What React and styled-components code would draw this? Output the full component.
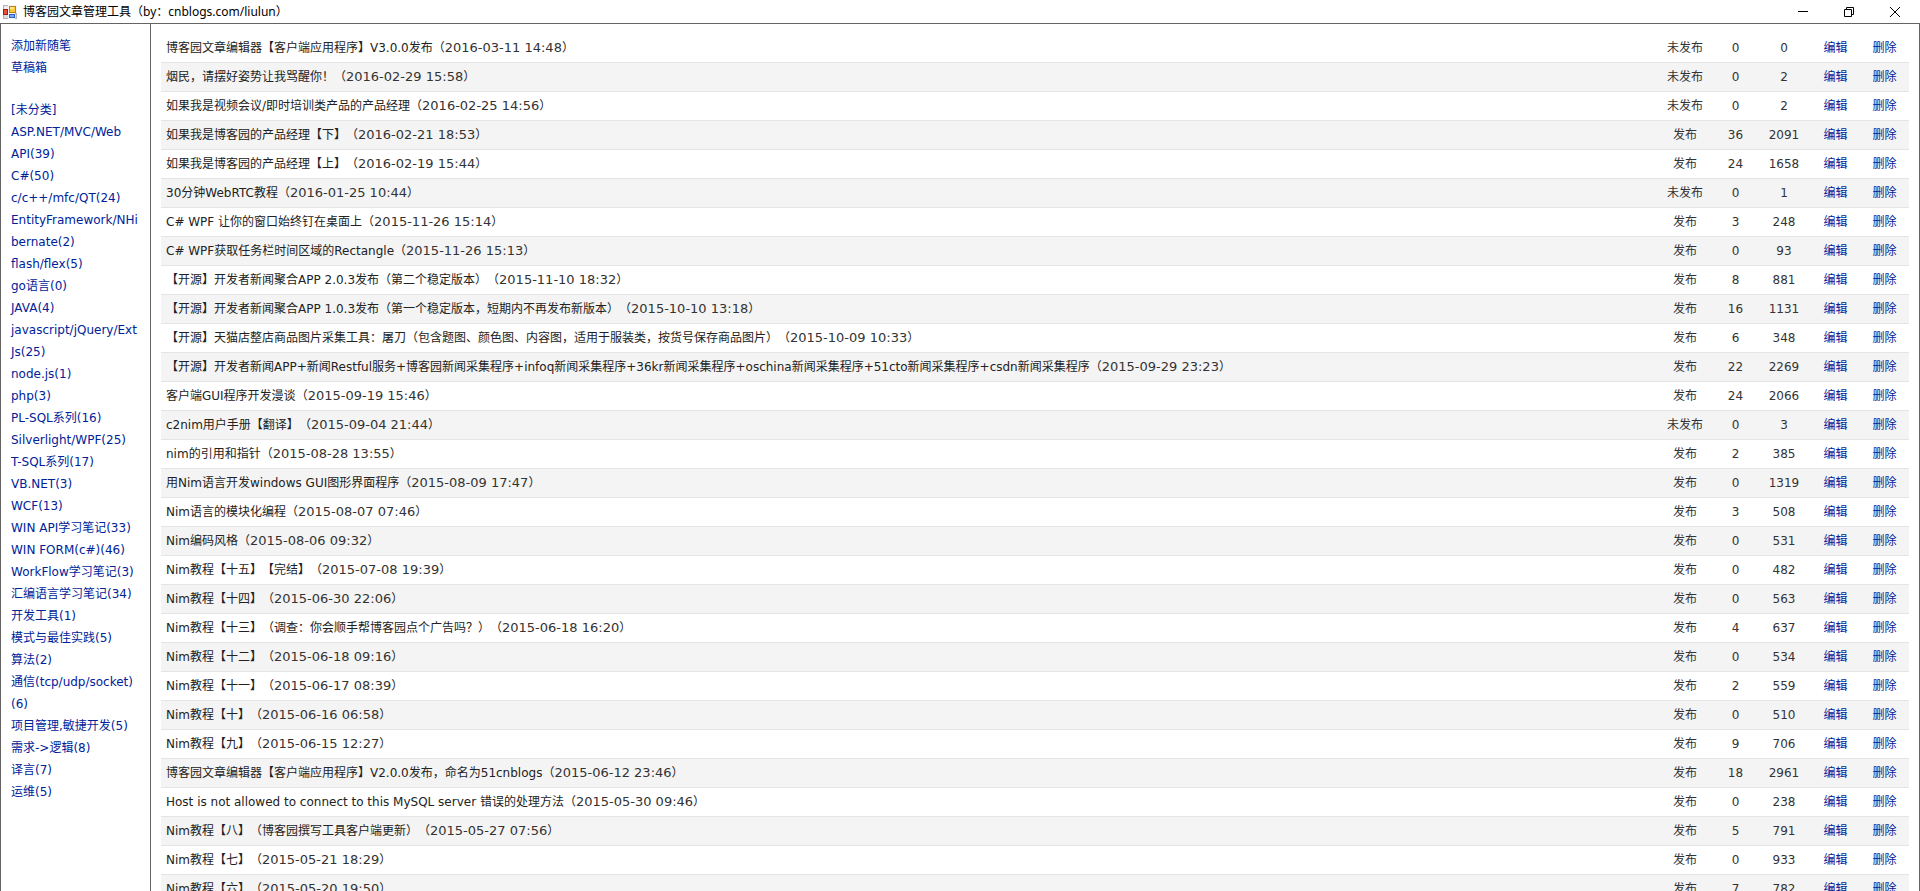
import styled, { createGlobalStyle } from 'styled-components';

const GlobalStyle = createGlobalStyle`
	* {
		box-sizing: border-box;
	}
	body {
		margin: 0;
		height: 100vh;
		overflow: hidden;
		background: #fff;
		color: #222;
		font-family: 'DejaVu Sans', 'Noto Sans CJK SC', sans-serif;
		font-size: 12px;
		text-spacing-trim: space-all;
	}
`;

const Window = styled.div`
	display: flex;
	flex-direction: column;
	height: 100vh;
`;

const TitleBar = styled.header`
	display: flex;
	align-items: center;
	height: 23px;
	flex-shrink: 0;
	padding: 0 2px 0 3px;
	color: #000;
`;

const AppTitle = styled.h1`
	flex: 1;
	margin: 0 0 0 6px;
	font-family: 'Noto Sans', 'Noto Sans CJK SC', sans-serif;
	font-size: 12px;
	line-height: 22px;
	font-weight: 400;
`;

const WindowButton = styled.button`
	display: flex;
	align-items: center;
	justify-content: center;
	width: 46px;
	height: 22px;
	padding: 0;
	border: 0;
	background: none;
	color: #000;
`;

const Body = styled.div`
	display: flex;
	flex: 1;
	min-height: 0;
	border: 1px solid #646464;
	border-bottom: 0;
`;

const Sidebar = styled.nav`
	width: 150px;
	flex-shrink: 0;
	padding: 11px 10px;
	border-right: 1px solid #646464;
	overflow: hidden;
`;

const LinkList = styled.ul`
	margin: 0 0 20px;
	padding: 0;
	list-style: none;
`;

const SideLink = styled.a`
	display: block;
	line-height: 22px;
	color: #002299;
	text-decoration: none;
	white-space: pre;
`;

const Main = styled.main`
	flex: 1;
	min-width: 0;
	padding: 10px;
	overflow: hidden;
`;

const PostTable = styled.table`
	width: 100%;
	border-collapse: separate;
	border-spacing: 0;
	table-layout: fixed;
`;

const Row = styled.tr`
	&:nth-child(even) {
		background: #f4f4f4;
	}
`;

const Cell = styled.td`
	width: ${({ $width }) => $width || 'auto'};
	height: 29px;
	padding: ${({ $width }) => ($width ? '0' : '0 5px')};
	border-bottom: 1px solid #e4e4e4;
	line-height: 28px;
	color: ${({ $width }) => ($width ? '#333' : 'inherit')};
	text-align: ${({ $width }) => ($width ? 'center' : 'left')};
	white-space: nowrap;
`;

const PostDate = styled.time`
	font-size: 13px;
	line-height: 20px;
	color: #333;
`;

const ActionLink = styled.a`
	color: #002299;
	text-decoration: none;
`;

const actions = ['添加新随笔', '草稿箱'];

const categories = [
	'[未分类]',
	'ASP.NET/MVC/Web\nAPI(39)',
	'C#(50)',
	'c/c++/mfc/QT(24)',
	'EntityFramework/NHi\nbernate(2)',
	'flash/flex(5)',
	'go语言(0)',
	'JAVA(4)',
	'javascript/jQuery/Ext\nJs(25)',
	'node.js(1)',
	'php(3)',
	'PL-SQL系列(16)',
	'Silverlight/WPF(25)',
	'T-SQL系列(17)',
	'VB.NET(3)',
	'WCF(13)',
	'WIN API学习笔记(33)',
	'WIN FORM(c#)(46)',
	'WorkFlow学习笔记(3)',
	'汇编语言学习笔记(34)',
	'开发工具(1)',
	'模式与最佳实践(5)',
	'算法(2)',
	'通信(tcp/udp/socket)\n(6)',
	'项目管理,敏捷开发(5)',
	'需求->逻辑(8)',
	'译言(7)',
	'运维(5)',
];

// title, date, published, comments, views
const posts = [
	['博客园文章编辑器【客户端应用程序】V3.0.0发布', '2016-03-11 14:48', false, 0, 0],
	['烟民，请摆好姿势让我骂醒你！', '2016-02-29 15:58', false, 0, 2],
	['如果我是视频会议/即时培训类产品的产品经理', '2016-02-25 14:56', false, 0, 2],
	['如果我是博客园的产品经理【下】', '2016-02-21 18:53', true, 36, 2091],
	['如果我是博客园的产品经理【上】', '2016-02-19 15:44', true, 24, 1658],
	['30分钟WebRTC教程', '2016-01-25 10:44', false, 0, 1],
	['C# WPF 让你的窗口始终钉在桌面上', '2015-11-26 15:14', true, 3, 248],
	['C# WPF获取任务栏时间区域的Rectangle', '2015-11-26 15:13', true, 0, 93],
	['【开源】开发者新闻聚合APP 2.0.3发布（第二个稳定版本）', '2015-11-10 18:32', true, 8, 881],
	['【开源】开发者新闻聚合APP 1.0.3发布（第一个稳定版本，短期内不再发布新版本）', '2015-10-10 13:18', true, 16, 1131],
	['【开源】天猫店整店商品图片采集工具：屠刀（包含题图、颜色图、内容图，适用于服装类，按货号保存商品图片）', '2015-10-09 10:33', true, 6, 348],
	['【开源】开发者新闻APP+新闻Restful服务+博客园新闻采集程序+infoq新闻采集程序+36kr新闻采集程序+oschina新闻采集程序+51cto新闻采集程序+csdn新闻采集程序', '2015-09-29 23:23', true, 22, 2269],
	['客户端GUI程序开发漫谈', '2015-09-19 15:46', true, 24, 2066],
	['c2nim用户手册【翻译】', '2015-09-04 21:44', false, 0, 3],
	['nim的引用和指针', '2015-08-28 13:55', true, 2, 385],
	['用Nim语言开发windows GUI图形界面程序', '2015-08-09 17:47', true, 0, 1319],
	['Nim语言的模块化编程', '2015-08-07 07:46', true, 3, 508],
	['Nim编码风格', '2015-08-06 09:32', true, 0, 531],
	['Nim教程【十五】【完结】', '2015-07-08 19:39', true, 0, 482],
	['Nim教程【十四】', '2015-06-30 22:06', true, 0, 563],
	['Nim教程【十三】（调查：你会顺手帮博客园点个广告吗？）', '2015-06-18 16:20', true, 4, 637],
	['Nim教程【十二】', '2015-06-18 09:16', true, 0, 534],
	['Nim教程【十一】', '2015-06-17 08:39', true, 2, 559],
	['Nim教程【十】', '2015-06-16 06:58', true, 0, 510],
	['Nim教程【九】', '2015-06-15 12:27', true, 9, 706],
	['博客园文章编辑器【客户端应用程序】V2.0.0发布，命名为51cnblogs', '2015-06-12 23:46', true, 18, 2961],
	['Host is not allowed to connect to this MySQL server 错误的处理方法', '2015-05-30 09:46', true, 0, 238],
	['Nim教程【八】（博客园撰写工具客户端更新）', '2015-05-27 07:56', true, 5, 791],
	['Nim教程【七】', '2015-05-21 18:29', true, 0, 933],
	['Nim教程【六】', '2015-05-20 19:50', true, 7, 782],
];

const AppIcon = () => (
	<svg width="14" height="14" viewBox="0 0 14 14" shapeRendering="crispEdges" aria-hidden="true">
		<rect width="14" height="14" fill="#b4b4b4" />
		<rect x="1" y="1" width="4" height="3" fill="#ececec" />
		<rect x="1" y="10" width="4" height="3" fill="#dcdcdc" />
		<rect x="12" y="9" width="1" height="4" fill="#dcdcdc" />
		<rect x="5" y="0" width="9" height="8" fill="#f4f4f4" />
		<rect x="6" y="1" width="7" height="7" fill="#b98313" />
		<rect x="7" y="2" width="5" height="5" fill="#ffc83c" />
		<rect x="7" y="2" width="4" height="2" fill="#ffe48c" />
		<rect x="0" y="4" width="5" height="6" fill="#a01c10" />
		<rect x="1" y="5" width="3" height="4" fill="#e8503c" />
		<rect x="5" y="8" width="7" height="6" fill="#f4f4f4" />
		<rect x="6" y="9" width="6" height="4" fill="#2c62c8" />
		<rect x="7" y="10" width="4" height="2" fill="#78acf8" />
	</svg>
);

const MinimizeIcon = () => (
	<svg width="10" height="10" viewBox="0 0 10 10" aria-hidden="true">
		<path d="M0 4.5h10" stroke="currentColor" />
	</svg>
);

const RestoreIcon = () => (
	<svg width="10" height="10" viewBox="0 0 10 10" fill="none" aria-hidden="true">
		<path d="M0.5 2.5h7v7h-7zM2.5 2.5v-2h7v7h-2" stroke="currentColor" />
	</svg>
);

const CloseIcon = () => (
	<svg width="10" height="10" viewBox="0 0 10 10" aria-hidden="true">
		<path d="M0 0l10 10M10 0L0 10" stroke="currentColor" />
	</svg>
);

const SideLinks = ({ items }) => (
	<LinkList>
		{items.map((item) => (
			<li key={item}>
				<SideLink href="#">{item}</SideLink>
			</li>
		))}
	</LinkList>
);

const PostRow = ({ post }) => {
	const [title, date, published, comments, views] = post;
	return (
		<Row>
			<Cell>
				{title}（<PostDate>{date}</PostDate>）
			</Cell>
			<Cell $width="58px">{published ? '发布' : '未发布'}</Cell>
			<Cell $width="43px">{comments}</Cell>
			<Cell $width="54px">{views}</Cell>
			<Cell $width="49px">
				<ActionLink href="#">编辑</ActionLink>
			</Cell>
			<Cell $width="49px">
				<ActionLink href="#">删除</ActionLink>
			</Cell>
		</Row>
	);
};

const App = () => {
	return (
		<Window>
			<GlobalStyle />
			<TitleBar>
				<AppIcon />
				<AppTitle>博客园文章管理工具（by：cnblogs.com/liulun）</AppTitle>
				<WindowButton aria-label="最小化">
					<MinimizeIcon />
				</WindowButton>
				<WindowButton aria-label="还原">
					<RestoreIcon />
				</WindowButton>
				<WindowButton aria-label="关闭">
					<CloseIcon />
				</WindowButton>
			</TitleBar>
			<Body>
				<Sidebar>
					<SideLinks items={actions} />
					<SideLinks items={categories} />
				</Sidebar>
				<Main>
					<PostTable>
						<tbody>
							{posts.map((post) => (
								<PostRow key={post[1]} post={post} />
							))}
						</tbody>
					</PostTable>
				</Main>
			</Body>
		</Window>
	);
};
export default App;
